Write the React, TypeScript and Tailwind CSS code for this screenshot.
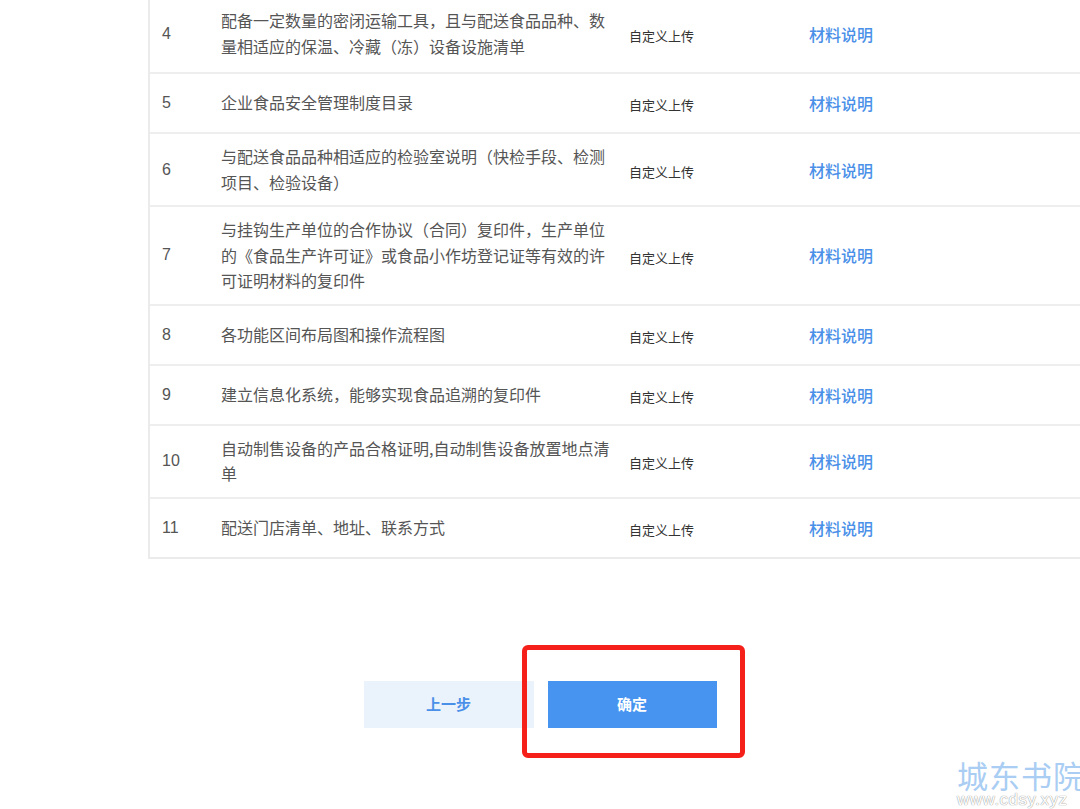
import React from "react";

type Row = { n: string; lines: string[] };

const rows: Row[] = [
  { n: "4", lines: ["配备一定数量的密闭运输工具，且与配送食品品种、数", "量相适应的保温、冷藏（冻）设备设施清单"] },
  { n: "5", lines: ["企业食品安全管理制度目录"] },
  { n: "6", lines: ["与配送食品品种相适应的检验室说明（快检手段、检测", "项目、检验设备）"] },
  { n: "7", lines: ["与挂钩生产单位的合作协议（合同）复印件，生产单位", "的《食品生产许可证》或食品小作坊登记证等有效的许", "可证明材料的复印件"] },
  { n: "8", lines: ["各功能区间布局图和操作流程图"] },
  { n: "9", lines: ["建立信息化系统，能够实现食品追溯的复印件"] },
  { n: "10", lines: ["自动制售设备的产品合格证明,自动制售设备放置地点清", "单"] },
  { n: "11", lines: ["配送门店清单、地址、联系方式"] },
];

const font = { fontFamily: '"Microsoft YaHei", "Noto Sans CJK SC", "Liberation Sans", sans-serif' };

export default function App() {
  return (
    <div
      className="relative w-[1080px] h-[809px] overflow-hidden bg-white"
      style={font}
    >
      <div className="ml-[148px] w-[960px] border-l-2 border-b-2 border-[#ebebeb]">
        {rows.map((r, i) => {
          const last = i === rows.length - 1;
          return (
            <div
              key={r.n}
              className={
                "grid grid-cols-[71px_408px_180px_1fr] items-center " +
                (last ? "min-h-[58px] " : "min-h-[60px] border-b-2 border-[#eeeeee] ") +
                (i === 0 ? "h-[74px] pt-0 pb-[5px]" : "py-[10px]")
              }
            >
              <div className="pl-[12px] text-[16px] text-[#555555]" style={{ fontFamily: '"Liberation Sans", "Noto Sans CJK SC", sans-serif' }}>
                {r.n}
              </div>
              <div className="pr-[14px] text-[16px] leading-[25.5px] text-[#555555]">
                {r.lines.map((l, k) => (
                  <div key={k} className="whitespace-nowrap">{l}</div>
                ))}
              </div>
              <div className="pt-[4px] text-[13px] text-[#333333]">自定义上传</div>
              <div className="text-[16px] font-medium text-[#4a90e8]">材料说明</div>
            </div>
          );
        })}
      </div>

      <div className="mt-[122px] flex justify-center gap-[14px]">
        <button className="w-[170px] h-[47px] bg-[#eaf3fc] text-[#4a90e8] text-[15px] font-bold">
          上一步
        </button>
        <div className="relative">
          <button className="w-[169px] h-[47px] bg-[#4694f0] text-white text-[15px] font-bold">
            确定
          </button>
          <div className="absolute left-[-26px] top-[-36px] w-[223px] h-[113px] border-[5px] border-[#f5201a] rounded-[6px]" />
        </div>
      </div>

      <div className="absolute left-[957px] top-[759px] whitespace-nowrap">
        <div className="text-[31px] leading-[32px] text-[#a9cdf3] tracking-[1px] [text-shadow:0_0_1px_#ffffff]">
          城东书院
        </div>
        <div
          className="text-[17px] leading-[17px] text-white tracking-[0.5px] [text-shadow:0_0_1px_#9a9a9a,0_0_1px_#9a9a9a]"
          style={{ fontFamily: '"Liberation Sans", sans-serif' }}
        >
          www.cdsy.xyz
        </div>
      </div>
    </div>
  );
}
